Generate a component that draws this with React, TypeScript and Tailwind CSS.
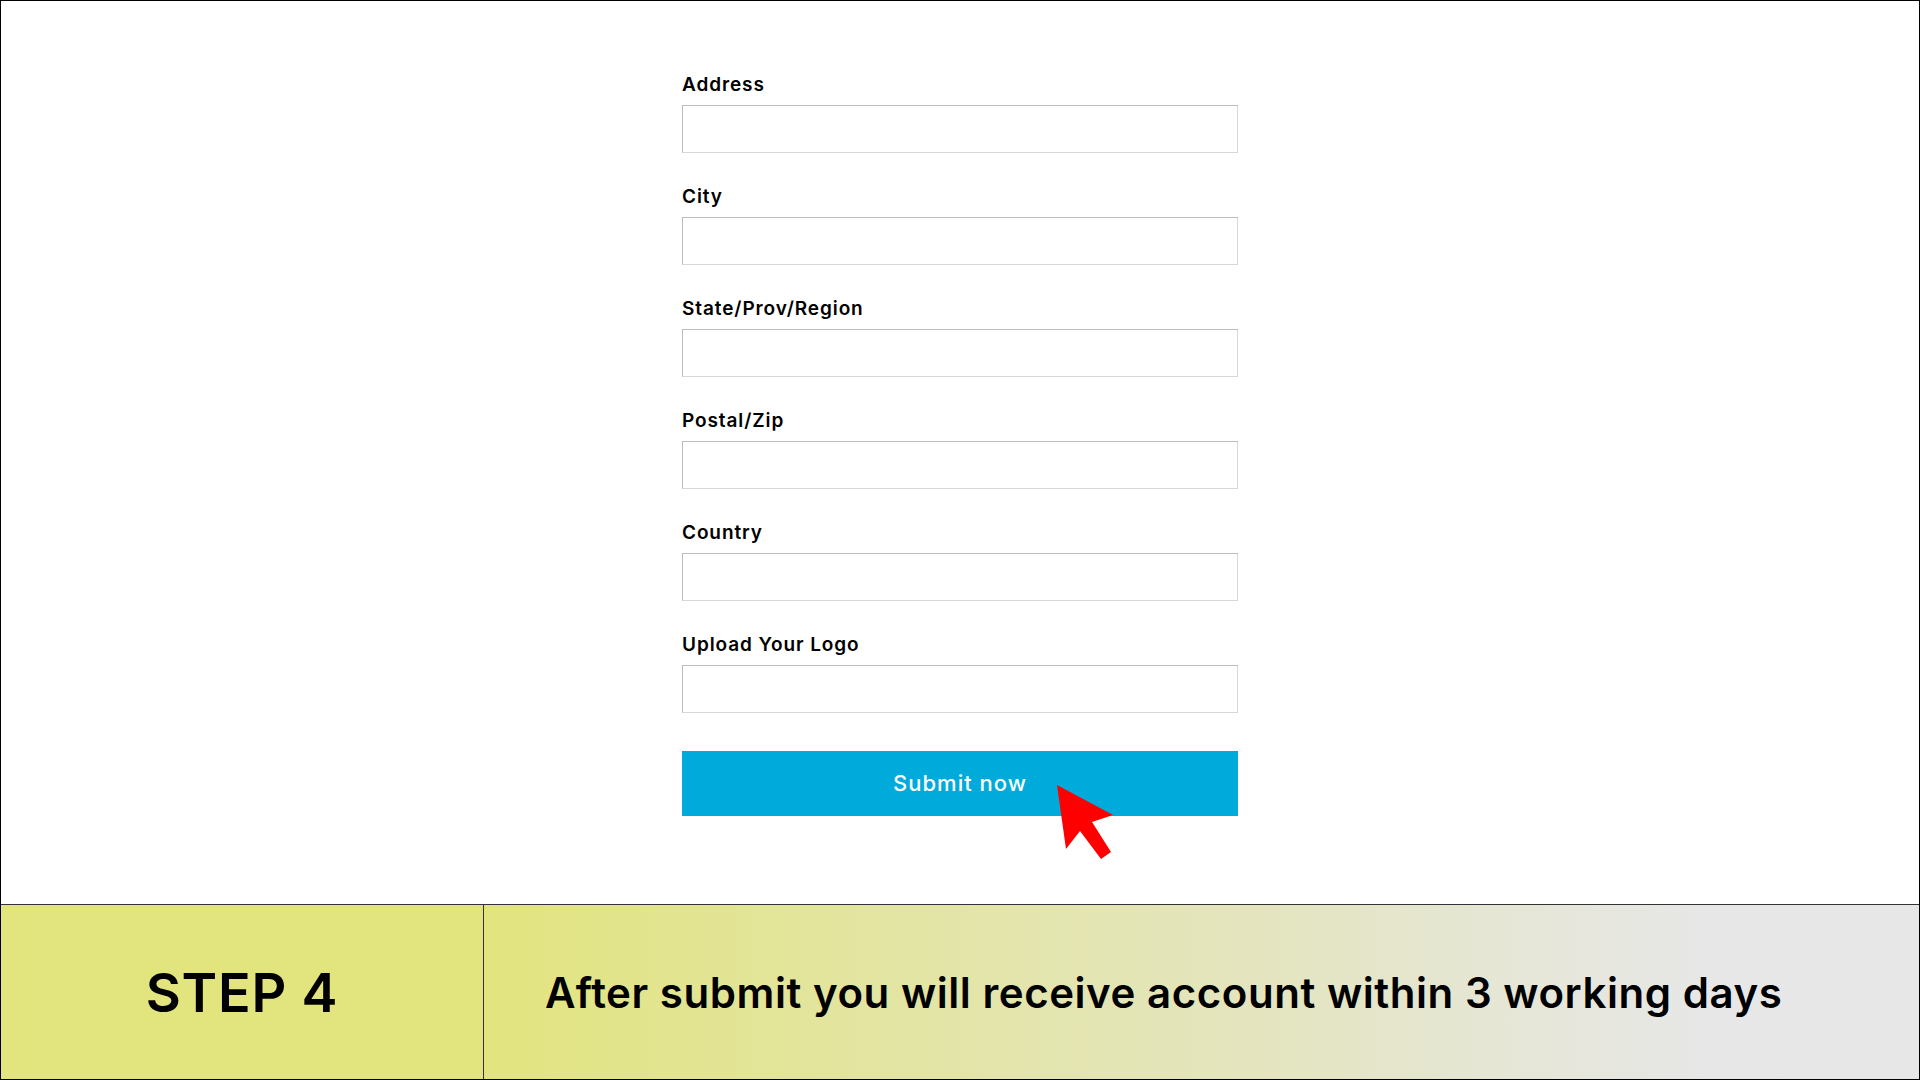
import React from 'react';

const fields = ['Address', 'City', 'State/Prov/Region', 'Postal/Zip', 'Country', 'Upload Your Logo'];

const font = { fontFamily: 'Inter, "Liberation Sans", sans-serif' };

export default function App() {
  return (
    <div
      className="w-[1920px] h-[1080px] border border-black flex flex-col bg-white text-black overflow-hidden"
      style={font}
    >
      {/* form area */}
      <div className="flex-1 flex justify-center pt-[72px]">
        <div className="w-[556px] flex flex-col">
          {fields.map((f) => (
            <div key={f} className="flex flex-col mb-[32px]">
              <label className="h-[24px] leading-[24px] text-[19px] font-semibold tracking-[0.9px] mb-[8px]">{f}</label>
              <div className="h-[48px] border border-[#d8d8d8] border-t-[#bdbdbd] border-l-[#bdbdbd] bg-white" />
            </div>
          ))}
          <div className="relative mt-[6px]">
            <button className="w-full h-[65px] bg-[#00aadb] text-white text-[22px] font-medium tracking-[1px]">
              Submit now
            </button>
            <svg
              className="absolute left-[368px] top-[29px]"
              width="70"
              height="85"
              viewBox="0 0 70 85"
            >
              <polygon points="7,5 63,35 42,42 61,72 51,79 30,51 16,69" fill="#ff0000" />
            </svg>
          </div>
        </div>
      </div>

      {/* step band */}
      <div className="h-[175px] border-t border-[#333333] flex">
        <div className="w-[483px] border-r border-[#333333] bg-[#e2e47d] flex items-center justify-center">
          <span className="text-[54px] font-semibold tracking-[0.8px]">STEP 4</span>
        </div>
        <div className="flex-1 flex items-center pl-[61px] bg-linear-to-r from-[#e2e47f] via-[#e4e5c0] via-55% to-[#e7e7e7] to-85%">
          <span className="text-[42px] font-semibold tracking-[0.55px]">
            After submit you will receive account within 3 working days
          </span>
        </div>
      </div>
    </div>
  );
}
